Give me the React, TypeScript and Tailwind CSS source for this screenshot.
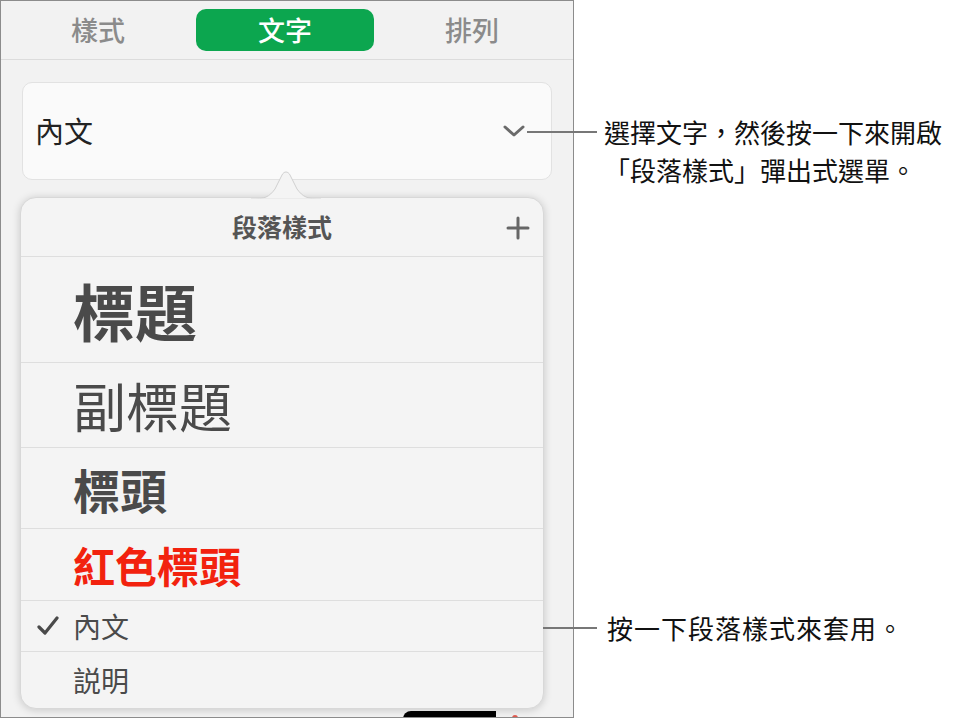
const rows = [
  { label: '標題', h: 'h-[106px]', text: 'text-[62px] font-bold text-[#4a4a4a]' },
  { label: '副標題', h: 'h-[85px]', text: 'text-[53px] font-normal text-[#4a4a4a]' },
  { label: '標頭', h: 'h-[81px]', text: 'text-[47px] font-bold text-[#4a4a4a]' },
  { label: '紅色標頭', h: 'h-[72px]', text: 'text-[42px] font-bold text-[#f2220e]' },
  { label: '內文', h: 'h-[51px]', text: 'text-[28px] font-normal text-[#4a4a4a]', checked: true },
  { label: '説明', h: 'h-[56px]', text: 'text-[28px] font-normal text-[#4a4a4a]' },
]

function Chevron() {
  return (
    <svg width="22" height="14" viewBox="0 0 22 14" fill="none">
      <path d="M2 3 L11 11 L20 3" stroke="#6a6a6a" strokeWidth="3" strokeLinecap="round" strokeLinejoin="round" />
    </svg>
  )
}

function Plus() {
  return (
    <svg width="24" height="24" viewBox="0 0 24 24" fill="none">
      <path d="M12 2 V22 M2 12 H22" stroke="#666" strokeWidth="3" strokeLinecap="round" />
    </svg>
  )
}

function Check() {
  return (
    <svg width="22" height="20" viewBox="0 0 22 20" fill="none">
      <path d="M2 11 L8 17 L20 2" stroke="#4a4a4a" strokeWidth="3.2" strokeLinecap="round" strokeLinejoin="round" />
    </svg>
  )
}

export default function App() {
  return (
    <div className="relative flex w-[979px] h-[718px] bg-white font-['Noto_Sans_CJK_TC','Noto_Sans',sans-serif] overflow-hidden">
      {/* inspector panel */}
      <div className="w-[574px] h-[718px] shrink-0 border border-[#8c8c8c] bg-[#f2f2f2] overflow-hidden flex flex-col">
        <div className="h-[59px] shrink-0 flex items-center px-[8px] gap-[9px] border-b border-[#dcdcdc]">
          <div className="w-[178px] text-center text-[27px] font-medium text-[#8b8b8b]">樣式</div>
          <div className="w-[178px] h-[42px] rounded-[10px] bg-[#0ca64f] flex items-center justify-center text-[27px] font-medium text-white">文字</div>
          <div className="w-[178px] text-center text-[27px] font-medium text-[#8b8b8b]">排列</div>
        </div>

        <div className="mx-[21px] mt-[22px] h-[98px] shrink-0 rounded-[10px] border border-[#e2e2e2] bg-[#fafafa] flex items-center justify-between pl-[12px] pr-[26px]">
          <span className="text-[29px] text-[#222]">內文</span>
          <Chevron />
        </div>

        {/* popover */}
        <div className="relative ml-[19px] w-[524px] mt-[17px] shrink-0 rounded-[16px] bg-[#f4f4f4] shadow-[0_1px_8px_rgba(0,0,0,0.18)] border border-[#d8d8d8]">
          <svg className="absolute left-[230px] top-[-28px]" width="70" height="30" viewBox="0 0 70 30">
            <path d="M0 29 C14 29 18 27 24 19 L31 5 C33 1 37 1 39 5 L46 19 C52 27 56 29 70 29 Z" fill="#f4f4f4" stroke="#d0d0d0" strokeWidth="1" />
            <rect x="0" y="28.5" width="70" height="2" fill="#f4f4f4" />
          </svg>
          <div className="relative h-[59px] flex items-center justify-center border-b border-[#dedede]">
            <span className="text-[25px] font-bold text-[#555]">段落樣式</span>
            <div className="absolute right-[13px] top-[18px]">
              <Plus />
            </div>
          </div>
          {rows.map((r, i) => (
            <div
              key={r.label}
              className={`${r.h} flex items-center pl-[52px] ${i < rows.length - 1 ? 'border-b border-[#dedede]' : ''}`}
            >
              {r.checked && (
                <div className="ml-[-36px] mr-[14px]">
                  <Check />
                </div>
              )}
              <span className={`${r.text} leading-none`}>{r.label}</span>
            </div>
          ))}
        </div>

        <div className="flex mt-[2px] pl-[402px] gap-[16px]">
          <div className="w-[93px] h-[10px] rounded-tl-[8px] bg-black" />
          <div className="w-[6px] h-[6px] mt-[4px] rounded-full bg-[#e25b50]" />
        </div>
      </div>

      {/* annotations */}
      <div className="flex flex-col text-[26px] leading-[38px] text-[#111]">
        <div className="pt-[113px] pl-[30px]">
          <div>選擇文字，然後按一下來開啟</div>
          <div>「段落樣式」彈出式選單。</div>
        </div>
        <div className="mt-[420px] pl-[33px] tracking-[1px]">按一下段落樣式來套用。</div>
      </div>

      <div className="absolute left-[527px] top-[131px] w-[70px] h-[2px] bg-[#777]" />
      <div className="absolute left-[543px] top-[627px] w-[54px] h-[2px] bg-[#777]" />
    </div>
  )
}
